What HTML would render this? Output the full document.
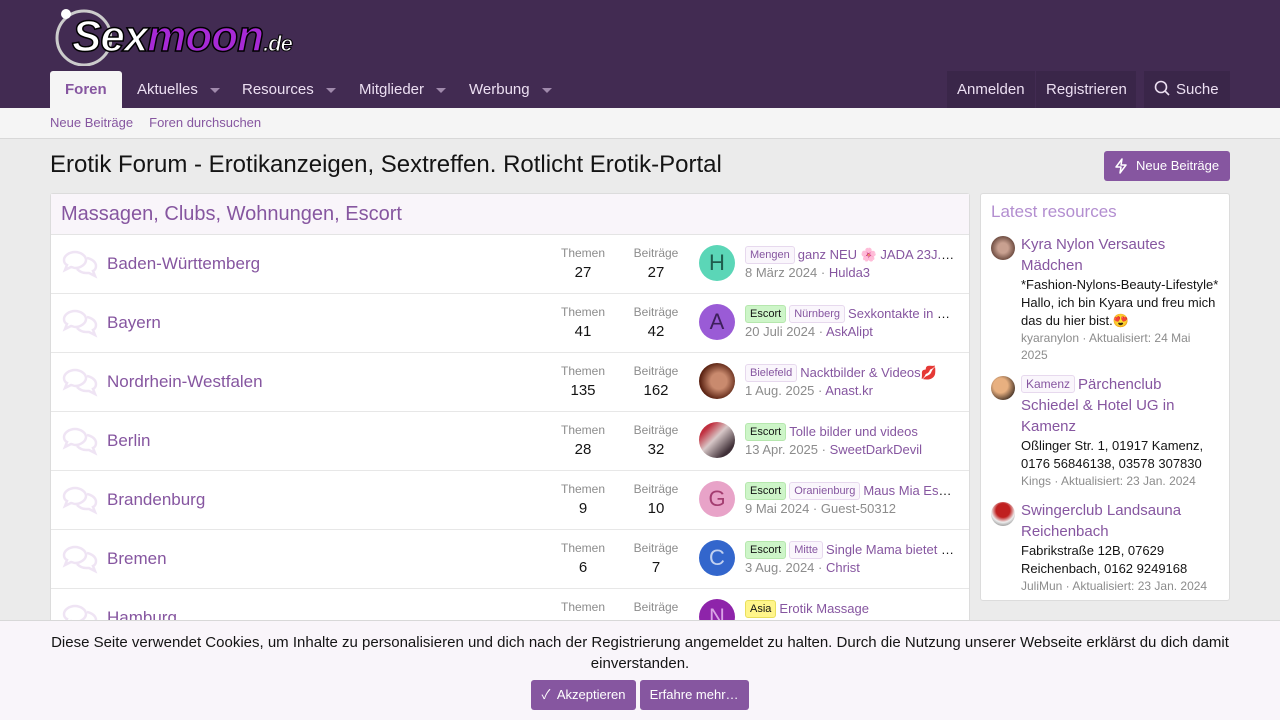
<!DOCTYPE html>
<html><head><meta charset="utf-8"><style>
*{box-sizing:border-box;margin:0;padding:0}
body{width:1280px;height:720px;overflow:hidden;background:#ebebeb;font-family:"Liberation Sans","Noto Sans CJK SC",sans-serif;color:#141414;font-size:13px;position:relative}
a{color:#8656a0;text-decoration:none}
.hdr{background:#422b52;height:108px;position:relative}
.logo{position:absolute;left:52px;top:6px;height:60px}
.logo .t{position:absolute;left:20px;top:6px;font:italic bold 44px "Liberation Sans",sans-serif;letter-spacing:-1px;white-space:nowrap}
.nav{position:absolute;top:71px;left:50px;right:50px;height:37px}
.tab{position:absolute;top:0;height:37px;line-height:37px;font-size:15px;color:#ecdff2}
.tab.sel{background:#f5f5f5;color:#8656a0;font-weight:bold;padding:0 15px;border-radius:3px 3px 0 0}
.car{display:inline-block;width:0;height:0;border-left:5px solid transparent;border-right:5px solid transparent;border-top:5px solid #a08aac;margin-left:12px;vertical-align:middle}
.rb{position:absolute;top:0;height:37px;line-height:37px;font-size:15px;color:#ecdff2;background:#3a2649;padding:0 10px}
.sub{background:#f5f5f5;height:31px;border-bottom:1px solid #d8d8d8;padding-left:50px;line-height:30px;font-size:13px}
.sub a{margin-right:16px}
h1{position:absolute;left:50px;top:151px;font-size:24px;font-weight:normal;color:#141414}
.btn{position:absolute;left:1104px;top:151px;width:126px;height:30px;background:#8656a0;border-radius:3px;color:#fff;font-size:13px;line-height:30px;padding-left:32px}
.blk{position:absolute;left:50px;top:193px;width:920px;height:520px;background:#fff;border:1px solid #dcdcdc;border-radius:3px}
.bh{height:41px;background:#f9f5fa;border-bottom:1px solid #e4e4e4;padding-left:10px;line-height:41px;font-size:20px;color:#8656a0}
.row{height:59px;border-bottom:1px solid #e7e7e7;position:relative}
.ic{position:absolute;left:10px;top:14px}
.fn{position:absolute;left:56px;top:19px;font-size:17px;color:#8656a0}
.st{position:absolute;top:11px;width:60px;text-align:center;font-size:12px;color:#8c8c8c}
.st b{display:block;font-weight:normal;color:#141414;font-size:15px;margin-top:4px}
.av{position:absolute;left:648px;top:10px;width:36px;height:36px;border-radius:50%;color:#fff;font-size:22px;text-align:center;line-height:36px}
.lp{position:absolute;left:694px;top:11px;width:210px;white-space:nowrap;overflow:hidden;text-overflow:ellipsis;font-size:13px}
.lp2{position:absolute;left:694px;top:30px;font-size:13px;color:#8c8c8c}
.lb{display:inline-block;font-size:11px;padding:1px 4px;border:1px solid #e7d9ee;background:#faf6fc;color:#8656a0;border-radius:3px;margin-right:3px;line-height:14px;vertical-align:1px}
.lb.g{background:#cdf5c8;border-color:#b6e7ae;color:#141414}
.lb.y{background:#fff58a;border-color:#e9df5c;color:#141414}
.side{position:absolute;left:980px;top:193px;width:250px;height:408px;background:#fff;border:1px solid #dcdcdc;border-radius:3px;padding:8px 10px}
.side h3{font-weight:normal;font-size:17px;color:#b38ed0;margin-bottom:12px}
.res{position:relative;padding-left:30px;margin-bottom:10px}
.res .a{position:absolute;left:0;top:2px;width:24px;height:24px;border-radius:50%}
.res .t{font-size:15px;line-height:21px;color:#8656a0}
.res .d{font-size:13px;line-height:18px}
.res .m{font-size:12px;color:#8c8c8c;line-height:17px}
.ck{position:absolute;left:0;top:620px;width:1280px;height:100px;background:#f9f5fa;border-top:1px solid #d8d8d8;text-align:center;font-size:15px;line-height:21px;padding-top:11px}
.cb{display:inline-block;height:30px;line-height:30px;background:#8656a0;color:#fff;font-size:13px;padding:0 10px;border-radius:3px;margin-top:6px}
</style></head><body>
<div class="hdr">
<div class="logo"><svg width="60" height="60" style="position:absolute;left:0;top:0"><circle cx="32" cy="32" r="27" fill="none" stroke="#ccc" stroke-width="3"/><circle cx="14" cy="8" r="5" fill="#fff"/></svg><span class="t"><span style="color:#fff;-webkit-text-stroke:1.5px #000">Sex</span><span style="color:#a72ad6;-webkit-text-stroke:1.5px #000">moon</span><span style="color:#fff;font-size:22px;-webkit-text-stroke:1px #000">.de</span></span></div>
<div class="nav">
<div class="tab sel" style="left:0">Foren</div>
<div class="tab" style="left:87px">Aktuelles<span class="car"></span></div>
<div class="tab" style="left:192px">Resources<span class="car"></span></div>
<div class="tab" style="left:309px">Mitglieder<span class="car"></span></div>
<div class="tab" style="left:419px">Werbung<span class="car"></span></div>
<div class="rb" style="left:897px">Anmelden</div>
<div class="rb" style="left:986px;width:100px">Registrieren</div>
<div class="rb" style="left:1094px;width:86px"><svg width="16" height="16" style="vertical-align:-2px;margin-right:6px"><circle cx="7" cy="7" r="5.5" fill="none" stroke="#ecdff2" stroke-width="1.6"/><line x1="11" y1="11" x2="15" y2="15" stroke="#ecdff2" stroke-width="1.6"/></svg>Suche</div>
</div></div>
<div class="sub"><a>Neue Beiträge</a><a>Foren durchsuchen</a></div>
<h1>Erotik Forum - Erotikanzeigen, Sextreffen. Rotlicht Erotik-Portal</h1>
<div class="btn"><svg width="14" height="16" style="position:absolute;left:10px;top:7px"><path d="M8 1L2 9h5l-1 6 6-8H7z" fill="none" stroke="#fff" stroke-width="1.5" stroke-linejoin="round"/></svg>Neue Beiträge</div>
<div class="blk">
<div class="bh">Massagen, Clubs, Wohnungen, Escort</div>
<div class="row"><svg class="ic" width="38" height="30"><path d="M14 3c-6 0-11 4-11 8 0 2 1 4 3 5l-2 5 6-3c1 0 3 1 4 1 6 0 11-4 11-8s-5-8-11-8z M26 9c5 1 9 4 9 8 0 2-1 4-3 5l2 5-6-3c-1 0-2 0-3 0-4 0-7-2-9-4" fill="none" stroke="#efe4f4" stroke-width="2.5"/></svg><div class="fn">Baden-Württemberg</div><div class="st" style="left:502px">Themen<b>27</b></div><div class="st" style="left:575px">Beiträge<b>27</b></div><div class="av" style="background:#5bd6b7;color:#1f5c4e">H</div><div class="lp"><span class="lb">Mengen</span><a>ganz NEU 🌸 JADA 23J. supergeil</a></div><div class="lp2">8 März 2024 · <a>Hulda3</a></div></div>
<div class="row"><svg class="ic" width="38" height="30"><path d="M14 3c-6 0-11 4-11 8 0 2 1 4 3 5l-2 5 6-3c1 0 3 1 4 1 6 0 11-4 11-8s-5-8-11-8z M26 9c5 1 9 4 9 8 0 2-1 4-3 5l2 5-6-3c-1 0-2 0-3 0-4 0-7-2-9-4" fill="none" stroke="#efe4f4" stroke-width="2.5"/></svg><div class="fn">Bayern</div><div class="st" style="left:502px">Themen<b>41</b></div><div class="st" style="left:575px">Beiträge<b>42</b></div><div class="av" style="background:#9a5bd6;color:#3d1f5c">A</div><div class="lp"><span class="lb g">Escort</span><span class="lb">Nürnberg</span><a>Sexkontakte in Nürnberg</a></div><div class="lp2">20 Juli 2024 · <a>AskAlipt</a></div></div>
<div class="row"><svg class="ic" width="38" height="30"><path d="M14 3c-6 0-11 4-11 8 0 2 1 4 3 5l-2 5 6-3c1 0 3 1 4 1 6 0 11-4 11-8s-5-8-11-8z M26 9c5 1 9 4 9 8 0 2-1 4-3 5l2 5-6-3c-1 0-2 0-3 0-4 0-7-2-9-4" fill="none" stroke="#efe4f4" stroke-width="2.5"/></svg><div class="fn">Nordrhein-Westfalen</div><div class="st" style="left:502px">Themen<b>135</b></div><div class="st" style="left:575px">Beiträge<b>162</b></div><div class="av" style="background:radial-gradient(circle at 55% 50%,#c98a6e 30%,#5a2212 70%)"></div><div class="lp"><span class="lb">Bielefeld</span><a>Nacktbilder &amp; Videos💋</a></div><div class="lp2">1 Aug. 2025 · <a>Anast.kr</a></div></div>
<div class="row"><svg class="ic" width="38" height="30"><path d="M14 3c-6 0-11 4-11 8 0 2 1 4 3 5l-2 5 6-3c1 0 3 1 4 1 6 0 11-4 11-8s-5-8-11-8z M26 9c5 1 9 4 9 8 0 2-1 4-3 5l2 5-6-3c-1 0-2 0-3 0-4 0-7-2-9-4" fill="none" stroke="#efe4f4" stroke-width="2.5"/></svg><div class="fn">Berlin</div><div class="st" style="left:502px">Themen<b>28</b></div><div class="st" style="left:575px">Beiträge<b>32</b></div><div class="av" style="background:linear-gradient(135deg,#c03040 20%,#d8c8c8 45%,#403038 80%)"></div><div class="lp"><span class="lb g">Escort</span><a>Tolle bilder und videos</a></div><div class="lp2">13 Apr. 2025 · <a>SweetDarkDevil</a></div></div>
<div class="row"><svg class="ic" width="38" height="30"><path d="M14 3c-6 0-11 4-11 8 0 2 1 4 3 5l-2 5 6-3c1 0 3 1 4 1 6 0 11-4 11-8s-5-8-11-8z M26 9c5 1 9 4 9 8 0 2-1 4-3 5l2 5-6-3c-1 0-2 0-3 0-4 0-7-2-9-4" fill="none" stroke="#efe4f4" stroke-width="2.5"/></svg><div class="fn">Brandenburg</div><div class="st" style="left:502px">Themen<b>9</b></div><div class="st" style="left:575px">Beiträge<b>10</b></div><div class="av" style="background:#e8a3c8;color:#a33d70">G</div><div class="lp"><span class="lb g">Escort</span><span class="lb">Oranienburg</span><a>Maus Mia Escort Oranienburg</a></div><div class="lp2">9 Mai 2024 · Guest-50312</div></div>
<div class="row"><svg class="ic" width="38" height="30"><path d="M14 3c-6 0-11 4-11 8 0 2 1 4 3 5l-2 5 6-3c1 0 3 1 4 1 6 0 11-4 11-8s-5-8-11-8z M26 9c5 1 9 4 9 8 0 2-1 4-3 5l2 5-6-3c-1 0-2 0-3 0-4 0-7-2-9-4" fill="none" stroke="#efe4f4" stroke-width="2.5"/></svg><div class="fn">Bremen</div><div class="st" style="left:502px">Themen<b>6</b></div><div class="st" style="left:575px">Beiträge<b>7</b></div><div class="av" style="background:#3366cc;color:#c2d1f0">C</div><div class="lp"><span class="lb g">Escort</span><span class="lb">Mitte</span><a>Single Mama bietet sich an</a></div><div class="lp2">3 Aug. 2024 · <a>Christ</a></div></div>
<div class="row"><svg class="ic" width="38" height="30"><path d="M14 3c-6 0-11 4-11 8 0 2 1 4 3 5l-2 5 6-3c1 0 3 1 4 1 6 0 11-4 11-8s-5-8-11-8z M26 9c5 1 9 4 9 8 0 2-1 4-3 5l2 5-6-3c-1 0-2 0-3 0-4 0-7-2-9-4" fill="none" stroke="#efe4f4" stroke-width="2.5"/></svg><div class="fn">Hamburg</div><div class="st" style="left:502px">Themen<b>12</b></div><div class="st" style="left:575px">Beiträge<b>14</b></div><div class="av" style="background:#8e24aa;color:#d9a3e6">N</div><div class="lp"><span class="lb y">Asia</span><a>Erotik Massage</a></div><div class="lp2">2024</div></div>
</div>
<div class="side"><h3>Latest resources</h3>
<div class="res"><div class="a" style="background:radial-gradient(circle,#c8a090 30%,#5a3a30 80%)"></div><div class="t">Kyra Nylon Versautes Mädchen</div><div class="d">*Fashion-Nylons-Beauty-Lifestyle* Hallo, ich bin Kyara und freu mich das du hier bist.😍</div><div class="m">kyaranylon · Aktualisiert: 24 Mai 2025</div></div>
<div class="res"><div class="a" style="background:radial-gradient(circle at 40% 40%,#e8b080 35%,#3a2a20 80%)"></div><div class="t"><span class="lb" style="font-size:12px">Kamenz</span>Pärchenclub Schiedel &amp; Hotel UG in Kamenz</div><div class="d">Oßlinger Str. 1, 01917 Kamenz, 0176 56846138, 03578 307830</div><div class="m">Kings · Aktualisiert: 23 Jan. 2024</div></div>
<div class="res"><div class="a" style="background:radial-gradient(circle at 50% 35%,#c02020 35%,#eee 60%,#777 90%)"></div><div class="t">Swingerclub Landsauna Reichenbach</div><div class="d">Fabrikstraße 12B, 07629 Reichenbach, 0162 9249168</div><div class="m">JuliMun · Aktualisiert: 23 Jan. 2024</div></div>
</div>
<div class="ck">Diese Seite verwendet Cookies, um Inhalte zu personalisieren und dich nach der Registrierung angemeldet zu halten. Durch die Nutzung unserer Webseite erklärst du dich damit<br>einverstanden.<br><span class="cb">✓&nbsp; Akzeptieren</span> <span class="cb">Erfahre mehr…</span></div>
</body></html>
